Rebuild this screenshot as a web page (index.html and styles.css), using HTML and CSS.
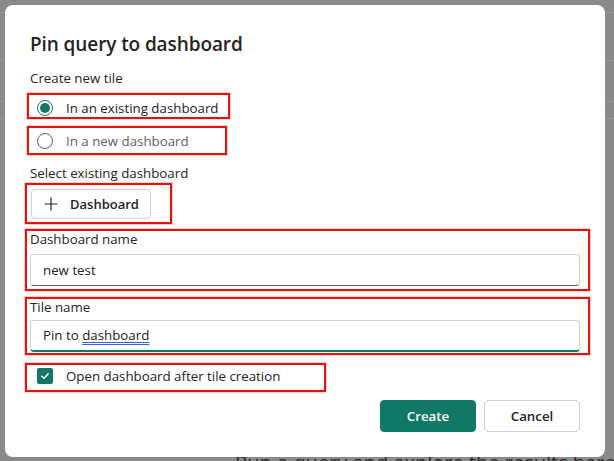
FILE: index.html
```html
<!DOCTYPE html>
<html lang="en">
<head>
<meta charset="utf-8">
<title>Pin query to dashboard</title>
<link rel="stylesheet" href="styles.css">
</head>
<body>
<div class="backdrop">
  <div class="bg-line l1"></div>
  <div class="bg-line l2"></div>
  <div class="bg-line l3"></div>
  <div class="bg-line l4"></div>
  <div class="bg-text">Run a query and explore the results here</div>
</div>

<div class="dialog" role="dialog" aria-label="Pin query to dashboard">
  <h1 class="title">Pin query to dashboard</h1>
  <div class="section-label">Create new tile</div>

  <div class="mark mark-r1">
    <label class="radio-row">
      <span class="radio checked"><span class="dot"></span></span>
      <span class="radio-text">In an existing dashboard</span>
    </label>
  </div>
  <div class="mark mark-r2">
    <label class="radio-row">
      <span class="radio"></span>
      <span class="radio-text muted">In a new dashboard</span>
    </label>
  </div>

  <div class="section-label sel">Select existing dashboard</div>
  <div class="mark mark-btn">
    <button class="btn-add" type="button">
      <svg class="plus" width="14" height="14" viewBox="0 0 14 14" aria-hidden="true">
        <path d="M7 0.5V13.5M0.5 7H13.5" stroke="#242424" stroke-width="1.2" fill="none"/>
      </svg>
      <span>Dashboard</span>
    </button>
  </div>

  <div class="mark mark-field f1">
    <div class="field-label">Dashboard name</div>
    <div class="input">new test</div>
  </div>

  <div class="mark mark-field f2">
    <div class="field-label">Tile name</div>
    <div class="input focused">Pin to <span class="spell">dashboard</span></div>
  </div>

  <div class="mark mark-check">
    <span class="checkbox">
      <svg width="10" height="10" viewBox="0 0 10 10" aria-hidden="true">
        <path d="M1.8 5.2L4 7.3L8.2 2.8" stroke="#fff" stroke-width="1.4" fill="none" stroke-linecap="round" stroke-linejoin="round"/>
      </svg>
    </span>
    <span class="check-text">Open dashboard after tile creation</span>
  </div>

  <div class="actions">
    <button class="btn primary" type="button">Create</button>
    <button class="btn secondary" type="button">Cancel</button>
  </div>
</div>
</body>
</html>
```

FILE: styles.css
```css
* { box-sizing: border-box; }

html, body {
  margin: 0;
  padding: 0;
}

body {
  width: 614px;
  height: 461px;
  overflow: hidden;
  background: #8a8a8a;
  font-family: "Open Sans", "Noto Sans", sans-serif;
  color: #242424;
  position: relative;
}

/* background app (dimmed) */
.backdrop {
  width: 614px;
  height: 461px;
  padding-top: 12px;
}
.bg-line {
  height: 1px;
  background: #979797;
}
.l1 { margin-top: 0; }
.l2 { margin-top: 47px; }
.l3 { margin-top: 40px; }
.l4 { margin-top: 16px; }
.bg-text {
  margin-top: 332px;
  margin-left: 235px;
  font-size: 20px;
  line-height: 24px;
  color: #2b2b2b;
  white-space: nowrap;
}

/* dialog overlay */
.dialog {
  position: absolute;
  top: 5px;
  left: 5px;
  width: 600px;
  height: 452px;
  background: #fff;
  border-radius: 8px;
  padding: 25px 25px 25px 25px;
  display: flex;
  flex-direction: column;
}

.title {
  margin: 0;
  font-size: 19px;
  line-height: 28px;
  font-weight: 600;
  color: #242424;
  letter-spacing: -0.1px;
}

.section-label {
  margin-top: 10px;
  font-size: 13.3px;
  line-height: 20px;
  color: #242424;
}
.section-label.sel { margin-top: 8px; }

/* red annotation highlights */
.mark {
  border: 2px solid #e3120b;
  box-shadow: 0 0 0 1px rgba(240, 120, 120, 0.35);
}
.mark-r1 {
  margin-top: 5px;
  margin-left: -3px;
  width: 203px;
  height: 26px;
  display: flex;
  align-items: center;
  padding-top: 3px;
  padding-left: 8px;
}
.mark-r2 {
  margin-top: 7px;
  margin-left: -3px;
  width: 200px;
  height: 29px;
  display: flex;
  align-items: center;
  padding-left: 8px;
}

.radio-row {
  display: flex;
  align-items: center;
  gap: 13px;
}
.radio {
  width: 16px;
  height: 16px;
  border-radius: 50%;
  border: 1px solid #616161;
  display: flex;
  align-items: center;
  justify-content: center;
  flex: none;
}
.radio.checked { border-color: #117865; }
.radio .dot {
  width: 10px;
  height: 10px;
  border-radius: 50%;
  background: #117865;
}
.radio-text {
  font-size: 13.3px;
  line-height: 20px;
  color: #242424;
  white-space: nowrap;
}
.radio-text.muted { color: #616161; }

.mark-btn {
  margin-left: -5px;
  width: 147px;
  height: 41px;
  padding: 4px 0 0 4px;
}
.btn-add {
  width: 120px;
  height: 30px;
  border: 1px solid #d1d1d1;
  border-radius: 4px;
  background: #fff;
  display: flex;
  align-items: center;
  padding: 0 0 0 12px;
  gap: 12px;
  font-family: inherit;
  font-size: 13px;
  font-weight: 600;
  color: #242424;
}
.plus { flex: none; }

.mark-field {
  margin-left: -5px;
  width: 565px;
  padding: 0 8px 0 3px;
}
.f1 { margin-top: 5px; height: 62px; padding-bottom: 3px; }
.f2 { margin-top: 6px; height: 58px; padding-bottom: 1px; }

.field-label {
  font-size: 13.3px;
  line-height: 16px;
  color: #242424;
}
.f1 .field-label { margin-top: 0; }
.f1 .input { margin-top: 7px; }
.f2 .input { margin-top: 5px; }

.input {
  width: 550px;
  height: 32px;
  border: 1px solid #d1d1d1;
  border-bottom-color: #616161;
  border-radius: 4px;
  padding: 0 12px;
  font-size: 13.3px;
  line-height: 30px;
  color: #242424;
}
.input.focused {
  border-bottom: 2px solid #117865;
  line-height: 29px;
}
.spell {
  text-decoration-line: underline;
  text-decoration-style: double;
  text-decoration-color: #3a5fe0;
  text-decoration-thickness: 1px;
  text-underline-offset: 2px;
}

.mark-check {
  margin-top: 8px;
  margin-left: -5px;
  width: 301px;
  height: 29px;
  display: flex;
  align-items: center;
  padding: 0 0 4px 10px;
  gap: 13px;
}
.checkbox {
  width: 16px;
  height: 16px;
  border-radius: 2px;
  background: #117865;
  display: flex;
  align-items: center;
  justify-content: center;
  flex: none;
}
.check-text {
  font-size: 13.3px;
  line-height: 20px;
  color: #242424;
  white-space: nowrap;
}

.actions {
  margin-top: 8px;
  display: flex;
  justify-content: flex-end;
  gap: 8px;
}
.btn {
  width: 96px;
  height: 32px;
  border-radius: 4px;
  font-family: inherit;
  font-size: 13.3px;
  font-weight: 600;
  cursor: pointer;
}
.btn.primary {
  background: #117865;
  border: 1px solid #117865;
  color: #fff;
}
.btn.secondary {
  background: #fff;
  border: 1px solid #d1d1d1;
  color: #242424;
}
```
